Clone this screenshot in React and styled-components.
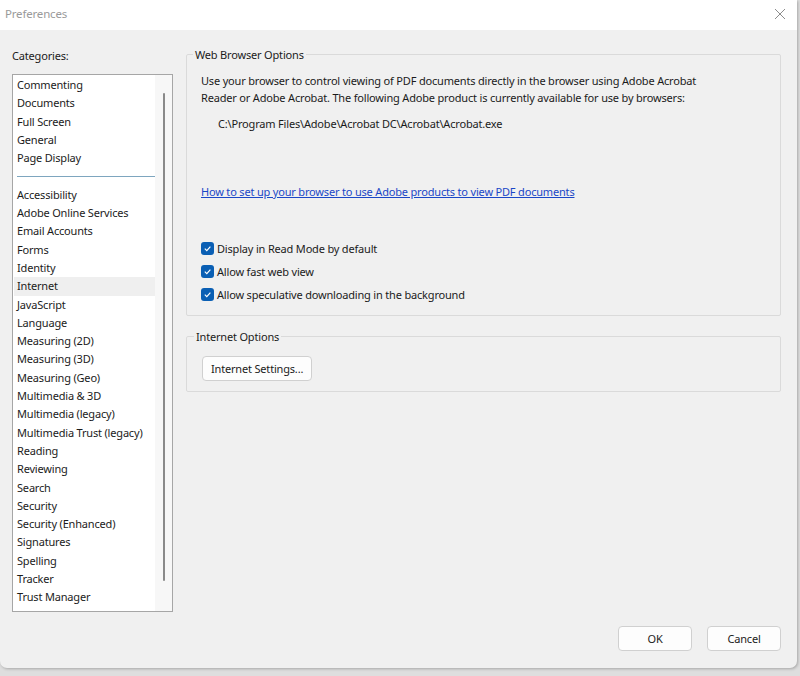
import React from "react";
import styled, { createGlobalStyle } from "styled-components";

const Global = createGlobalStyle`
  html, body {
    margin: 0;
    padding: 0;
    background: #dedede;
  }
  body {
    font-family: "Noto Sans", "Open Sans", sans-serif;
    font-size: 11px;
    letter-spacing: -0.18px;
    color: #1b1b1b;
  }
`;

const Page = styled.div`
  width: 800px;
  height: 676px;
  overflow: hidden;
`;

const Window = styled.div`
  width: 797px;
  height: 668px;
  background: #f0f0f0;
  border-radius: 0 0 7px 7px;
  box-shadow: 1px 1px 3px rgba(0, 0, 0, 0.25);
  display: flex;
  flex-direction: column;
  overflow: hidden;
`;

const TitleBar = styled.div`
  height: 30px;
  flex: none;
  box-sizing: border-box;
  background: #ffffff;
  display: flex;
  align-items: center;
  justify-content: space-between;
  padding: 0 9px 3px 5px;
`;

const Title = styled.span`
  color: #9a9a9a;
  font-size: 11.5px;
`;

const Close = styled.button`
  border: 0;
  background: transparent;
  padding: 0;
  width: 16px;
  height: 16px;
  display: flex;
  align-items: center;
  justify-content: center;
  svg {
    stroke: #8c8c8c;
  }
`;

const Body = styled.div`
  flex: 1;
  display: flex;
  gap: 13px;
  padding: 0 16px 0 12px;
`;

const Sidebar = styled.div`
  width: 161px;
  flex: none;
  display: flex;
  flex-direction: column;
`;

const Label = styled.div`
  height: 44px;
  line-height: 51px;
`;

const ListBox = styled.div`
  height: 538px;
  border: 1px solid #a6a6a6;
  background: #ffffff;
  display: flex;
  box-sizing: border-box;
`;

const Items = styled.div`
  flex: 1;
  min-width: 0;
  overflow: hidden;
  padding: 1px 0 0 1px;
`;

const Item = styled.div`
  height: 18.3px;
  line-height: 18.3px;
  padding-left: 3px;
  white-space: nowrap;
  background: ${(p) => (p.$selected ? "#efefef" : "transparent")};
`;

const Separator = styled.div`
  height: 18.3px;
  display: flex;
  align-items: center;
  padding: 0 0 0 3px;
  &::after {
    content: "";
    flex: 1;
    height: 1px;
    background: #7ea6bf;
  }
`;

const ScrollTrack = styled.div`
  width: 17px;
  background: #f7f7f7;
  display: flex;
  justify-content: center;
  padding-top: 18px;
  padding-bottom: 30px;
`;

const Thumb = styled.div`
  width: 2px;
  background: #8a8a8a;
  border-radius: 1px;
`;

const Content = styled.div`
  flex: 1;
  display: flex;
  flex-direction: column;
  gap: 13px;
  padding-top: 17px;
`;

const Group = styled.fieldset`
  margin: 0;
  border: 1px solid #dadada;
  border-radius: 2px;
  padding: ${(p) => p.$pad};
  min-height: ${(p) => p.$h};
  box-sizing: border-box;
  legend {
    padding: 0 2px;
    margin-left: -8px;
  }
`;

const Para = styled.p`
  margin: 0;
  line-height: 17px;
`;

const Path = styled.div`
  margin: 10px 0 0 17px;
`;

const Link = styled.a`
  display: inline-block;
  margin-top: 53px;
  color: #1a47c7;
  text-decoration: underline;
  cursor: pointer;
`;

const Checks = styled.div`
  margin-top: 40px;
  display: flex;
  flex-direction: column;
  gap: 5px;
`;

const CheckRow = styled.label`
  display: flex;
  align-items: center;
  gap: 3px;
  height: 18px;
`;

const Box = styled.span`
  width: 13px;
  height: 13px;
  border-radius: 3px;
  background: #0a5fb4;
  display: flex;
  align-items: center;
  justify-content: center;
`;

const Button = styled.button`
  font: inherit;
  letter-spacing: inherit;
  color: #1b1b1b;
  background: #fdfdfd;
  border: 1px solid #d0d0d0;
  border-radius: 4px;
  height: 25px;
  width: ${(p) => p.$w || "auto"};
  padding: 0 8px;
`;

const Footer = styled.div`
  height: 56px;
  flex: none;
  display: flex;
  justify-content: flex-end;
  align-items: flex-start;
  gap: 15px;
  padding: 14px 16px 0 0;
  box-sizing: border-box;
`;

const Check = ({ children }) => (
  <CheckRow>
    <Box>
      <svg width="9" height="9" viewBox="0 0 10 10" fill="none">
        <path d="M2 5.2 L4.2 7.3 L8.2 2.8" stroke="#fff" strokeWidth="1.3" />
      </svg>
    </Box>
    {children}
  </CheckRow>
);

const top = ["Commenting", "Documents", "Full Screen", "General", "Page Display"];
const rest = [
  "Accessibility",
  "Adobe Online Services",
  "Email Accounts",
  "Forms",
  "Identity",
  "Internet",
  "JavaScript",
  "Language",
  "Measuring (2D)",
  "Measuring (3D)",
  "Measuring (Geo)",
  "Multimedia & 3D",
  "Multimedia (legacy)",
  "Multimedia Trust (legacy)",
  "Reading",
  "Reviewing",
  "Search",
  "Security",
  "Security (Enhanced)",
  "Signatures",
  "Spelling",
  "Tracker",
  "Trust Manager",
];

export default function App() {
  return (
    <Page>
      <Global />
      <Window>
        <TitleBar>
          <Title>Preferences</Title>
          <Close aria-label="Close">
            <svg width="12" height="12" viewBox="0 0 12 12" fill="none">
              <path d="M1 1 L11 11 M11 1 L1 11" strokeWidth="1" />
            </svg>
          </Close>
        </TitleBar>
        <Body>
          <Sidebar>
            <Label>Categories:</Label>
            <ListBox>
              <Items>
                {top.map((t) => (
                  <Item key={t}>{t}</Item>
                ))}
                <Separator />
                {rest.map((t) => (
                  <Item key={t} $selected={t === "Internet"}>
                    {t}
                  </Item>
                ))}
              </Items>
              <ScrollTrack>
                <Thumb />
              </ScrollTrack>
            </ListBox>
          </Sidebar>
          <Content>
            <Group $pad="10px 14px 0 14px" $h="269px">
              <legend>Web Browser Options</legend>
              <Para>
                Use your browser to control viewing of PDF documents directly in the browser using Adobe Acrobat
                <br />
                Reader or Adobe Acrobat. The following Adobe product is currently available for use by browsers:
              </Para>
              <Path>C:\Program Files\Adobe\Acrobat DC\Acrobat\Acrobat.exe</Path>
              <Link>How to set up your browser to use Adobe products to view PDF documents</Link>
              <Checks>
                <Check>Display in Read Mode by default</Check>
                <Check>Allow fast web view</Check>
                <Check>Allow speculative downloading in the background</Check>
              </Checks>
            </Group>
            <Group $pad="12px 15px 0 15px" $h="63px">
              <legend>Internet Options</legend>
              <Button>Internet Settings...</Button>
            </Group>
          </Content>
        </Body>
        <Footer>
          <Button $w="74px">OK</Button>
          <Button $w="74px">Cancel</Button>
        </Footer>
      </Window>
    </Page>
  );
}
